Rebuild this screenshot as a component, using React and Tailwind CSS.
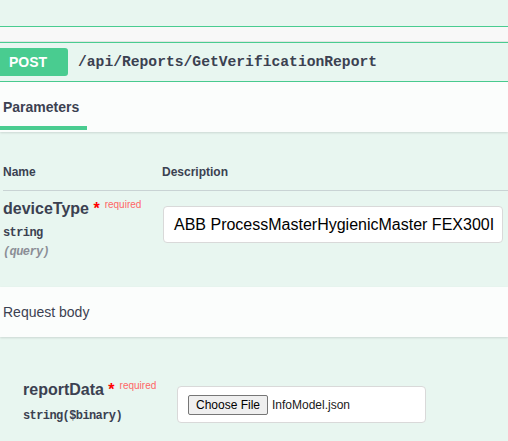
import React from 'react';

const sans = 'font-["Liberation_Sans",Arial,sans-serif]';
const mono = 'font-["Liberation_Mono","Courier_New",monospace]';

const RequiredName = ({ name }) => (
  <div className={`${sans} text-[16px] leading-5 font-bold text-[#3b4151] whitespace-nowrap`}>
    {name}
    <span className="text-[#ff0000] text-[16px]">&nbsp;*</span>
    <span className="relative -top-[6px] pl-[5px] text-[10px] font-normal text-[#ff6666]">required</span>
  </div>
);

export default function App() {
  return (
    <div className={`${sans} w-[508px] h-[441px] overflow-hidden bg-[#e8f6f0] text-[#3b4151]`}>
      {/* previous block edge */}
      <div className="h-[26px]" />
      <div className="border-y border-[#49cc90] bg-[#f8f8f8]">
        <div className="h-[14px]" />
        <div className="h-px bg-[#e2e4e3]" />
      </div>

      {/* summary */}
      <div className="flex items-center h-[39px] border-b border-[#49cc90]">
        <div className="flex items-center w-[68px] h-[28px] pl-[9px] rounded-r-[3px] bg-[#49cc90] text-white text-[14px] font-bold">
          POST
        </div>
        <span className={`${mono} ml-[10px] text-[14.67px] font-bold text-[#3b4151]`}>
          /api/Reports/GetVerificationReport
        </span>
      </div>

      {/* tab header */}
      <div className="relative h-[50px] bg-[#fbfdfc] shadow-[0_1px_2px_rgba(0,0,0,0.12)]">
        <div className="w-[87px]">
          <div className="pt-[15px] pl-[3px] text-[14px] leading-5 font-bold">Parameters</div>
          <div className="mt-[9px] h-[4px] bg-[#49cc90]" />
        </div>
      </div>

      {/* parameter table */}
      <div className="pl-[3px]">
        <div className="flex pt-[32px] pb-[10px] border-b border-[#c9d3d4] text-[12px] leading-4 font-bold">
          <div className="w-[159px]">Name</div>
          <div>Description</div>
        </div>
        <div className="flex h-[96px]">
          <div className="w-[160px] pt-[8px]">
            <RequiredName name="deviceType" />
            <div className={`${mono} mt-[3px] text-[12px] tracking-[-0.6px] leading-[19px] font-bold`}>string</div>
            <div className={`${mono} text-[12px] tracking-[-0.6px] leading-[19px] font-bold italic text-[#8b8e96]`}>(query)</div>
          </div>
          <div className="mt-[15px] flex items-center w-[340px] h-[37px] pl-[10px] pr-[10px] bg-white border border-[#d9d9d9] rounded-[4px] overflow-hidden">
            <span className="text-[16px] text-black whitespace-nowrap">ABB ProcessMasterHygienicMaster FEX300I</span>
          </div>
        </div>
      </div>

      {/* request body header */}
      <div className="relative py-[15px] pl-[3px] bg-[#fbfdfc] shadow-[0_1px_2px_rgba(0,0,0,0.12)]">
        <div className="text-[14px] leading-5">Request body</div>
      </div>

      {/* request body */}
      <div className="flex pt-[43px] pl-[23px]">
        <div className="w-[154px]">
          <RequiredName name="reportData" />
          <div className={`${mono} mt-[5px] text-[12px] tracking-[-0.6px] leading-[19px] font-bold`}>string($binary)</div>
        </div>
        <div className="mt-[6px] flex items-center w-[249px] h-[37px] pl-[10px] bg-white border border-[#d9d9d9] rounded-[4px]">
          <div className="flex items-center justify-center w-[80px] h-[20px] bg-[#efefef] border border-[#767676] rounded-[2px] text-[12px] text-black">
            Choose File
          </div>
          <span className="ml-[4px] text-[12px] text-[#1a1a1a]">InfoModel.json</span>
        </div>
      </div>
    </div>
  );
}
